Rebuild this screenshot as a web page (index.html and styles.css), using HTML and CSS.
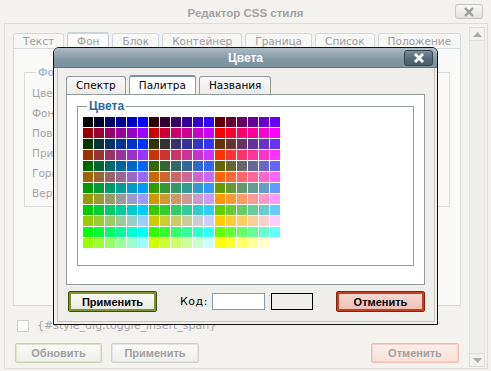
FILE: index.html
```html
<!DOCTYPE html>
<html>
<head>
  <meta charset="UTF-8">
  <title>Редактор CSS стиля</title>
  <link rel="stylesheet" href="styles.css">
</head>
<body>
  <!-- основное окно (неактивно) -->
  <div class="editor">
    <div class="editor-title">
      <h1>Редактор CSS стиля</h1>
      <button class="close close-light" title="Закрыть">
        <svg width="12" height="10" viewBox="0 0 12 10"><path d="M2 1 L10 9 M10 1 L2 9" stroke="#9a9a9a" stroke-width="2.4"/></svg>
      </button>
    </div>

    <div class="editor-body">
      <div class="editor-main">
        <ul class="tabs">
          <li>Текст</li>
          <li class="current">Фон</li>
          <li>Блок</li>
          <li>Контейнер</li>
          <li>Граница</li>
          <li>Список</li>
          <li>Положение</li>
        </ul>
        <div class="tab-panel">
          <fieldset class="group">
            <legend>Фон</legend>
            <div class="field">Цвет фона:</div>
            <div class="field">Фоновое изображение:</div>
            <div class="field">Повтор:</div>
            <div class="field">Прикрепление:</div>
            <div class="field">Горизонтальная позиция:</div>
            <div class="field">Вертикальная позиция:</div>
          </fieldset>
        </div>

        <label class="toggle"><span class="check"></span>{#style_dlg.toggle_insert_span}</label>

        <div class="actions">
          <button class="btn btn-green">Обновить</button>
          <button class="btn btn-grey">Применить</button>
          <button class="btn btn-red">Отменить</button>
        </div>
      </div>

      <div class="scrollbar">
        <div class="arrow"><svg width="9" height="5" viewBox="0 0 9 5"><path d="M0 5 L4.5 0 L9 5 Z" fill="#a8a8a8"/></svg></div>
        <div class="track"></div>
        <div class="arrow"><svg width="9" height="5" viewBox="0 0 9 5"><path d="M0 0 L4.5 5 L9 0 Z" fill="#a8a8a8"/></svg></div>
      </div>
    </div>
  </div>

  <!-- диалог выбора цвета -->
  <div class="dialog">
    <div class="dialog-title">
      <h2>Цвета</h2>
      <button class="close close-dark" title="Закрыть">
        <svg width="12" height="10" viewBox="0 0 12 10"><path d="M2 1 L10 9 M10 1 L2 9" stroke="#fff" stroke-width="2.8"/></svg>
      </button>
    </div>
    <div class="dialog-body">
      <div class="dialog-inner">
        <ul class="tabs tabs-dark">
          <li>Спектр</li>
          <li class="current">Палитра</li>
          <li>Названия</li>
        </ul>
        <div class="tab-panel palette-panel">
          <fieldset class="group colors">
            <legend>Цвета</legend>
            <div class="palette" id="palette"></div>
          </fieldset>
        </div>
        <div class="dialog-actions">
          <button class="btn btn-green on">Применить</button>
          <label class="code-label" for="color">Код:</label>
          <input type="text" id="color" class="code">
          <div class="preview"></div>
          <button class="btn btn-red on">Отменить</button>
        </div>
      </div>
    </div>
  </div>

  <script>
    // веб-палитра 216 цветов, 18 в ряд
    const palette = document.getElementById("palette");
    const hex = n => n.toString(16).padStart(2, "0");

    for (let row = 0; row < 12; row++) {
      for (let col = 0; col < 18; col++) {
        const r = ((row % 2) * 3 + Math.floor(col / 6)) * 51;
        const g = Math.floor(row / 2) * 51;
        const b = (col % 6) * 51;
        const cell = document.createElement("a");
        const color = "#" + hex(r) + hex(g) + hex(b);
        cell.className = "cell";
        cell.title = color;
        cell.style.background = color;
        cell.onclick = () => {
          document.getElementById("color").value = color;
          document.querySelector(".preview").style.background = color;
        };
        palette.appendChild(cell);
      }
    }
  </script>
</body>
</html>
```

FILE: styles.css
```css
* { box-sizing: border-box; }

body {
  margin: 0;
  width: 491px;
  height: 371px;
  overflow: hidden;
  position: relative;
  background: #f3f2ee;
  font-family: "DejaVu Sans", Verdana, sans-serif;
  font-size: 10.5px;
}

ul { list-style: none; margin: 0; padding: 0; }
button { font-family: inherit; cursor: pointer; }

/* ---------- основное окно ---------- */
.editor {
  height: 371px;
  display: flex;
  flex-direction: column;
  color: #a3a3a3;
}
.editor-title {
  height: 23px;
  display: grid;
  grid-template-columns: 1fr auto 1fr;
  padding: 4px 8px 0 8px;
}
.editor-title h1 {
  grid-column: 2;
  margin: 0;
  font: bold 11.5px "Liberation Sans", Arial, sans-serif;
  line-height: 18px;
  color: #a2a2a2;
}
.close {
  justify-self: end;
  padding: 0;
  display: flex;
  align-items: center;
  justify-content: center;
}
.close-light {
  width: 28px;
  height: 15px;
  border: 1px solid #c4c4c4;
  border-radius: 3px;
  background: linear-gradient(#f7f7f5, #e2e2de);
}
.editor-body {
  flex: 1;
  display: flex;
  margin: 0 3px 2px 4px;
  border: 1px solid #dcdcd8;
}
.editor-main {
  flex: 1;
  padding: 9px 0 0 8px;
}

.tabs {
  display: flex;
  align-items: flex-end;
  gap: 3px;
  height: 15px;
}
.tabs li {
  height: 15px;
  padding: 0 9px;
  line-height: 14px;
  border: 1px solid #d2d9dd;
  border-bottom: none;
  border-radius: 3px 3px 0 0;
  background: #f6f6f4;
  color: #9e9e9e;
}
.tabs li.current {
  height: 16px;
  background: #fbfbfa;
  border-color: #c3ccd2;
  border-top: 2px solid #c8d2d8;
}
.tab-panel {
  width: 448px;
  height: 258px;
  border: 1px solid #d3d9dc;
  background: #f9f9f7;
  padding: 17px 10px 0 10px;
}
.group {
  margin: 0;
  padding: 5px 0 0 7px;
  border: 1px solid #dcdcda;
  height: 141px;
}
.group legend {
  margin-left: 4px;
  padding: 0 2px;
  font: bold 11px "Liberation Sans", Arial, sans-serif;
  color: #a7bedb;
}
.field {
  height: 20px;
  line-height: 20px;
  color: #a4a4a4;
}

.toggle {
  display: flex;
  align-items: center;
  gap: 8px;
  margin: 13px 0 0 4px;
  height: 13px;
  font-size: 11px;
  color: #a6a6a6;
}
.check {
  width: 12px;
  height: 12px;
  border: 1px solid #cfcfcf;
  background: #fbfbfa;
}

.actions {
  display: flex;
  gap: 9px;
  margin: 11px 0 0 2px;
  width: 444px;
}
.btn {
  height: 20px;
  width: 88px;
  padding: 0;
  font: bold 11px "Liberation Sans", Arial, sans-serif;
  color: #a0a0a0;
  border-radius: 2px;
}
.btn-green {
  width: 87px;
  border: 1px solid #c9d4ad;
  box-shadow: inset 0 0 0 1px #dfe7cb;
  background: linear-gradient(#fafaf8, #eeeeea);
}
.btn-grey {
  border: 1px solid #cfcfcf;
  box-shadow: inset 0 0 0 1px #e4e4e4;
  background: linear-gradient(#fafaf8, #eeeeea);
}
.btn-red {
  margin-left: auto;
  border: 1px solid #f0bdb1;
  box-shadow: inset 0 0 0 1px #f5d2c8;
  background: linear-gradient(#fcefec, #f7dfd9);
}

.scrollbar {
  width: 16px;
  margin: 3px 2px 1px 0;
  display: flex;
  flex-direction: column;
}
.arrow {
  height: 14px;
  border: 1px solid #dcdcd8;
  background: #f1f1ef;
  display: flex;
  align-items: center;
  justify-content: center;
}
.track {
  flex: 1;
  border-left: 1px solid #e2e2de;
  border-right: 1px solid #e2e2de;
  background: #eeeeeb;
}

/* ---------- диалог «Цвета» ---------- */
.dialog {
  position: absolute;
  left: 53px;
  top: 47px;
  width: 385px;
  height: 278px;
  border: 1px solid #111;
  border-radius: 6px 6px 0 0;
  overflow: hidden;
  display: flex;
  flex-direction: column;
  background: #efeeea;
}
.dialog-title {
  height: 20px;
  display: grid;
  grid-template-columns: 1fr auto 1fr;
  align-items: center;
  padding: 0 4px 0 4px;
  background: linear-gradient(#aebcc5, #8197a4 60%, #7a909d);
  border-bottom: 1px solid #5f7380;
}
.dialog-title h2 {
  grid-column: 2;
  margin: 0;
  font: bold 12px "Liberation Sans", Arial, sans-serif;
  color: #fff;
}
.close-dark {
  width: 29px;
  height: 16px;
  border: 1px solid #36454e;
  border-radius: 3px;
  background: linear-gradient(#7b8e9a, #556975 55%, #4b5e6a);
}
.dialog-body {
  flex: 1;
  padding: 0 2px 2px 3px;
}
.dialog-inner {
  height: 100%;
  border: 1px solid #cbc2bc;
  border-top: none;
  padding: 8px 0 0 8px;
}

.tabs-dark,
.tabs-dark li { height: 18px; }
.tabs-dark li {
  padding: 0 9px;
  line-height: 17px;
  border-color: #919b9c;
  background: linear-gradient(#fafaf9, #ecebe7);
  color: #000;
}
.tabs-dark li.current {
  height: 19px;
  background: #fff;
  border-color: #919b9c;
  border-top: 2px solid #7d919e;
}
.tabs-dark { gap: 3px; }

.palette-panel {
  width: 359px;
  height: 191px;
  border-color: #919b9c;
  background: #fff;
  padding: 4px 10px 0 10px;
}
.colors {
  height: 167px;
  width: 337px;
  padding: 4px 0 0 5px;
  border-color: #919b9c;
}
.colors legend {
  margin-left: 4px;
  padding: 0 2px;
  font-size: 12px;
  color: #2b65b0;
}
.palette {
  display: grid;
  grid-template-columns: repeat(18, 10px);
  grid-auto-rows: 10px;
  gap: 1px;
}
.cell { display: block; cursor: pointer; }

.dialog-actions {
  display: flex;
  align-items: center;
  width: 357px;
  margin: 6px 0 0 2px;
  font-size: 11px;
}
.dialog-actions .btn { width: 89px; height: 21px; color: #000; }
.btn-green.on {
  border: 1px solid #3f4a12;
  box-shadow: inset 0 0 0 2px #7d9229;
  background: linear-gradient(#fbfbf8, #e9e9e3);
}
.btn-red.on {
  border: 1px solid #7c2510;
  box-shadow: inset 0 0 0 2px #c63d1d;
  background: linear-gradient(#f8ddd7, #eebcb1);
}
.code-label { margin-left: 23px; letter-spacing: 0.5px; }
.code {
  width: 53px;
  height: 17px;
  margin-left: 4px;
  border: 1px solid #7f9db9;
  background: #fff;
}
.preview {
  width: 42px;
  height: 17px;
  margin-left: 6px;
  border: 1px solid #000;
}
```
